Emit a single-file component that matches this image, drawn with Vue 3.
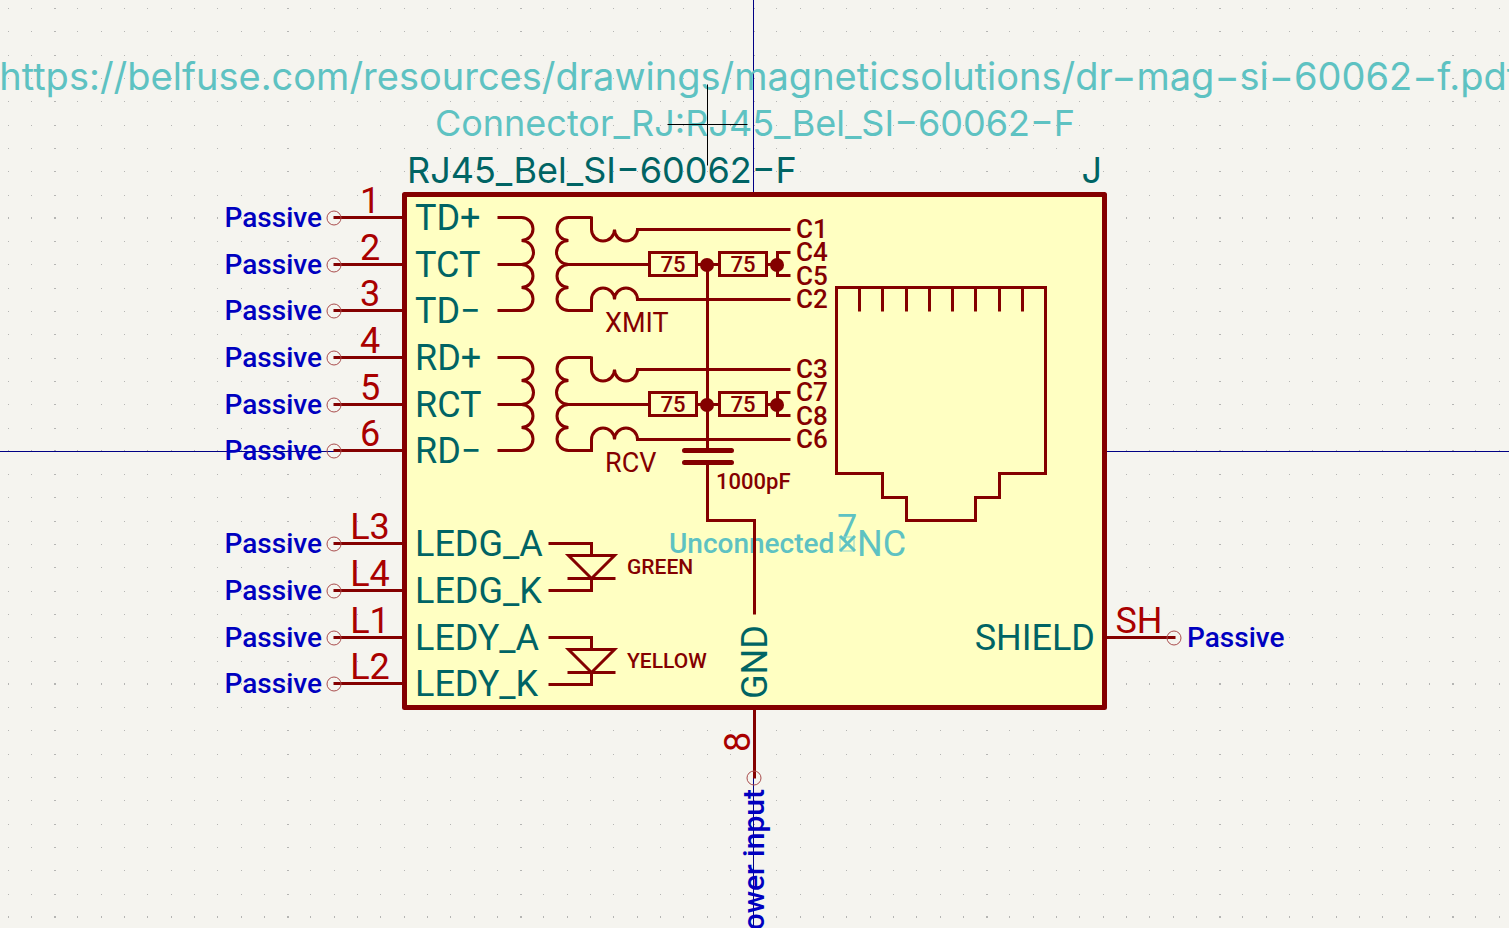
<script setup>
const columns = [0, 23, 47, 70, 93, 117, 140, 163, 187, 210]
const rows = [0, 24, 47, 71, 94, 117, 141, 164, 187, 211]

// One grid tile is ten steps wide; every tenth dot is two pixels long.
const gridTile = rows
  .flatMap((y) =>
    columns.map((x) => {
      const w = x === 0 ? 2 : 1
      const h = y === 0 ? 2 : 1
      return `M${x} ${y}h${w}v${h}h-${w}z`
    })
  )
  .join('')

const leftPins = [
  { number: '1', name: 'TD+', y: 217 },
  { number: '2', name: 'TCT', y: 264 },
  { number: '3', name: 'TD−', y: 310 },
  { number: '4', name: 'RD+', y: 357 },
  { number: '5', name: 'RCT', y: 404 },
  { number: '6', name: 'RD−', y: 450 },
  { number: 'L3', name: 'LEDG_A', y: 543 },
  { number: 'L4', name: 'LEDG_K', y: 590 },
  { number: 'L1', name: 'LEDY_A', y: 637 },
  { number: 'L2', name: 'LEDY_K', y: 683 }
]

const channels = [
  { label: 'XMIT', dy: 0, contacts: ['C1', 'C4', 'C5', 'C2'] },
  { label: 'RCV', dy: 140, contacts: ['C3', 'C7', 'C8', 'C6'] }
]
const contactY = [238, 261, 285, 308]

const leds = [
  { label: 'GREEN', dy: 0 },
  { label: 'YELLOW', dy: 94 }
]

const contactTicks = [859, 882, 906, 929, 952, 975, 999, 1022]
</script>

<template>
  <main class="editor">
    <svg class="sheet" viewBox="0 0 1509 928" role="img" aria-label="RJ45_Bel_SI-60062-F symbol">
      <defs>
        <pattern id="grid" x="54" y="217" width="233" height="233" patternUnits="userSpaceOnUse">
          <path class="dot" :d="gridTile" />
        </pattern>
      </defs>
      <rect x="-1509" y="-928" width="4527" height="2784" fill="url(#grid)" />

      <g transform="translate(0.5 0.5)">
        <path class="axis" d="M753 -928V1856M-1509 451H3018" />
        <rect class="body" x="404" y="194" width="700" height="513" />
      </g>

      <g class="hidden-field">
        <text class="field link" x="760" y="90" text-anchor="middle">https://belfuse.com/resources/drawings/magneticsolutions/dr−mag−si−60062−f.pdf</text>
        <text class="field" x="755" y="136" text-anchor="middle">Connector_RJ:RJ45_Bel_SI−60062−F</text>
        <text class="pin-type muted" x="669" y="553">Unconnected</text>
        <text class="pin-text" x="847" y="540" text-anchor="middle">7</text>
        <text class="pin-text" x="857" y="556">NC</text>
      </g>
      <rect class="no-connect-box" x="840" y="537" width="14" height="14" />
      <path class="no-connect" d="M840 536L855 551M855 536L840 551" />

      <text class="field value" x="407" y="183">RJ45_Bel_SI−60062−F</text>
      <text class="field value" x="1102" y="183" text-anchor="end">J</text>

      <g v-for="pin in leftPins" :key="pin.number" :transform="`translate(0 ${pin.y})`">
        <path class="wire" transform="translate(0.5 0.5)" d="M333 0H402" />
        <circle class="pin-end" cx="334" cy="1" r="7" />
        <text class="pin-type" x="322" y="10" text-anchor="end">Passive</text>
        <text class="pin-text number" x="370" y="-4" text-anchor="middle">{{ pin.number }}</text>
        <text class="pin-text name" x="415" y="13">{{ pin.name }}</text>
      </g>

      <path class="wire" transform="translate(0.5 0.5)" d="M1106 637H1175M754 709V778" />
      <circle class="pin-end" cx="1174" cy="638" r="7" />
      <circle class="pin-end" cx="754" cy="778" r="7" />
      <text class="pin-text name" x="1095" y="650" text-anchor="end">SHIELD</text>
      <text class="pin-text number" x="1139" y="633" text-anchor="middle">SH</text>
      <text class="pin-type" x="1187" y="647">Passive</text>
      <text class="pin-text name" transform="translate(767 662) rotate(-90)" text-anchor="middle">GND</text>
      <text class="pin-text number" transform="translate(750 742) rotate(-90)" text-anchor="middle">8</text>
      <text class="pin-type power" transform="translate(764 789) rotate(-90)" text-anchor="end">Power input</text>

      <g v-for="channel in channels" :key="channel.label" :transform="`translate(0 ${channel.dy})`">
        <g transform="translate(0.5 0.5)">
          <path class="wire" d="M497 217H521a11 11 0 0 1 0 23a11 11 0 0 1 0 24a11 11 0 0 1 0 23a11 11 0 0 1 0 23H497M497 264H524" />
          <path class="wire" d="M591 217H568a11 11 0 0 0 0 23a11 11 0 0 0 0 24a11 11 0 0 0 0 23a11 11 0 0 0 0 23H591V299a11 11 0 0 1 23 0a11 11 0 0 1 23 0H790" />
          <path class="wire" d="M591 216V229a11 11 0 0 0 23 0a11 11 0 0 0 23 0H790M565 264H649" />
          <path class="wire" d="M649 252H696V275H649zM696 264H719M719 252H766V275H719zM766 264H777M790 252H777V275H790" />
        </g>
        <circle class="junction" cx="707" cy="265" r="7" />
        <circle class="junction" cx="777" cy="265" r="7" />
        <text class="note small" x="673" y="272" text-anchor="middle">75</text>
        <text class="note small" x="743" y="272" text-anchor="middle">75</text>
        <text v-for="(contact, i) in channel.contacts" :key="contact" class="note contact" x="796" :y="contactY[i]">{{ contact }}</text>
        <text class="note title" x="605" y="332">{{ channel.label }}</text>
      </g>

      <g transform="translate(0.5 0.5)">
        <path class="wire" d="M707 264V450M707 462V520H754V614" />
        <path class="plate" d="M684 450H731M684 462H731" />
      </g>
      <text class="note small" x="716" y="489">1000pF</text>

      <g v-for="led in leds" :key="led.label" :transform="`translate(0 ${led.dy})`">
        <path class="wire" transform="translate(0.5 0.5)" d="M548 543H591V555M568 555H614L591 578zM567 578H615M591 578V590H548" />
        <text class="note small led" x="627" y="574">{{ led.label }}</text>
      </g>

      <g transform="translate(0.5 0.5)">
        <path class="wire" d="M836 287H1045V473H999V497H975V520H906V497H882V473H836z" />
        <path v-for="x in contactTicks" :key="x" class="wire" :d="`M${x} 287V311`" />
        <path class="cursor" d="M707 84V165M667 124H747" />
      </g>
    </svg>
  </main>
</template>

<style>
body {
  margin: 0;
  background: #f5f4ef;
}
</style>

<style scoped>
.editor {
  height: 100vh;
  overflow: hidden;
  background: #f5f4ef;
}

.sheet {
  display: block;
  width: 100%;
  height: 100%;
  overflow: visible;
  font-family: Roboto, "Liberation Sans", sans-serif;
}

.dot {
  fill: #b5b5b3;
  shape-rendering: crispEdges;
}

.axis {
  fill: none;
  stroke: #000084;
  stroke-width: 1;
  shape-rendering: crispEdges;
}

.cursor {
  fill: none;
  stroke: #000;
  stroke-width: 1;
}

.body {
  fill: #ffffc2;
  stroke: #840000;
  stroke-width: 5;
  stroke-linejoin: round;
}

.wire {
  fill: none;
  stroke: #840000;
  stroke-width: 3;
}

.plate {
  fill: none;
  stroke: #840000;
  stroke-width: 5;
  stroke-linecap: round;
}

.junction {
  fill: #840000;
}

.pin-end {
  fill: none;
  stroke: #a94c4c;
  stroke-width: 1;
}

.no-connect {
  fill: none;
  stroke: #5ec2c2;
  stroke-width: 3;
}

.no-connect-box {
  fill: none;
  stroke: #8fd5cc;
  stroke-width: 1;
}

.field {
  font-family: Inter, "DejaVu Sans", sans-serif;
  font-size: 36px;
}

.link {
  font-size: 38px;
}

.value {
  fill: #006464;
}

.hidden-field {
  fill: #5ec2c2;
}

.pin-text {
  font-size: 36px;
}

.name {
  fill: #006464;
}

.number {
  fill: #a90000;
}

.pin-type {
  font-size: 28px;
  font-weight: 500;
  fill: #0000c0;
}

.power {
  font-size: 30px;
}

.muted {
  fill: #5ec2c2;
}

.note {
  fill: #840000;
}

.small {
  font-size: 22px;
  font-weight: 500;
}

.led {
  font-size: 21px;
}

.contact {
  font-size: 26px;
  font-weight: 500;
}

.title {
  font-size: 27px;
}
</style>
